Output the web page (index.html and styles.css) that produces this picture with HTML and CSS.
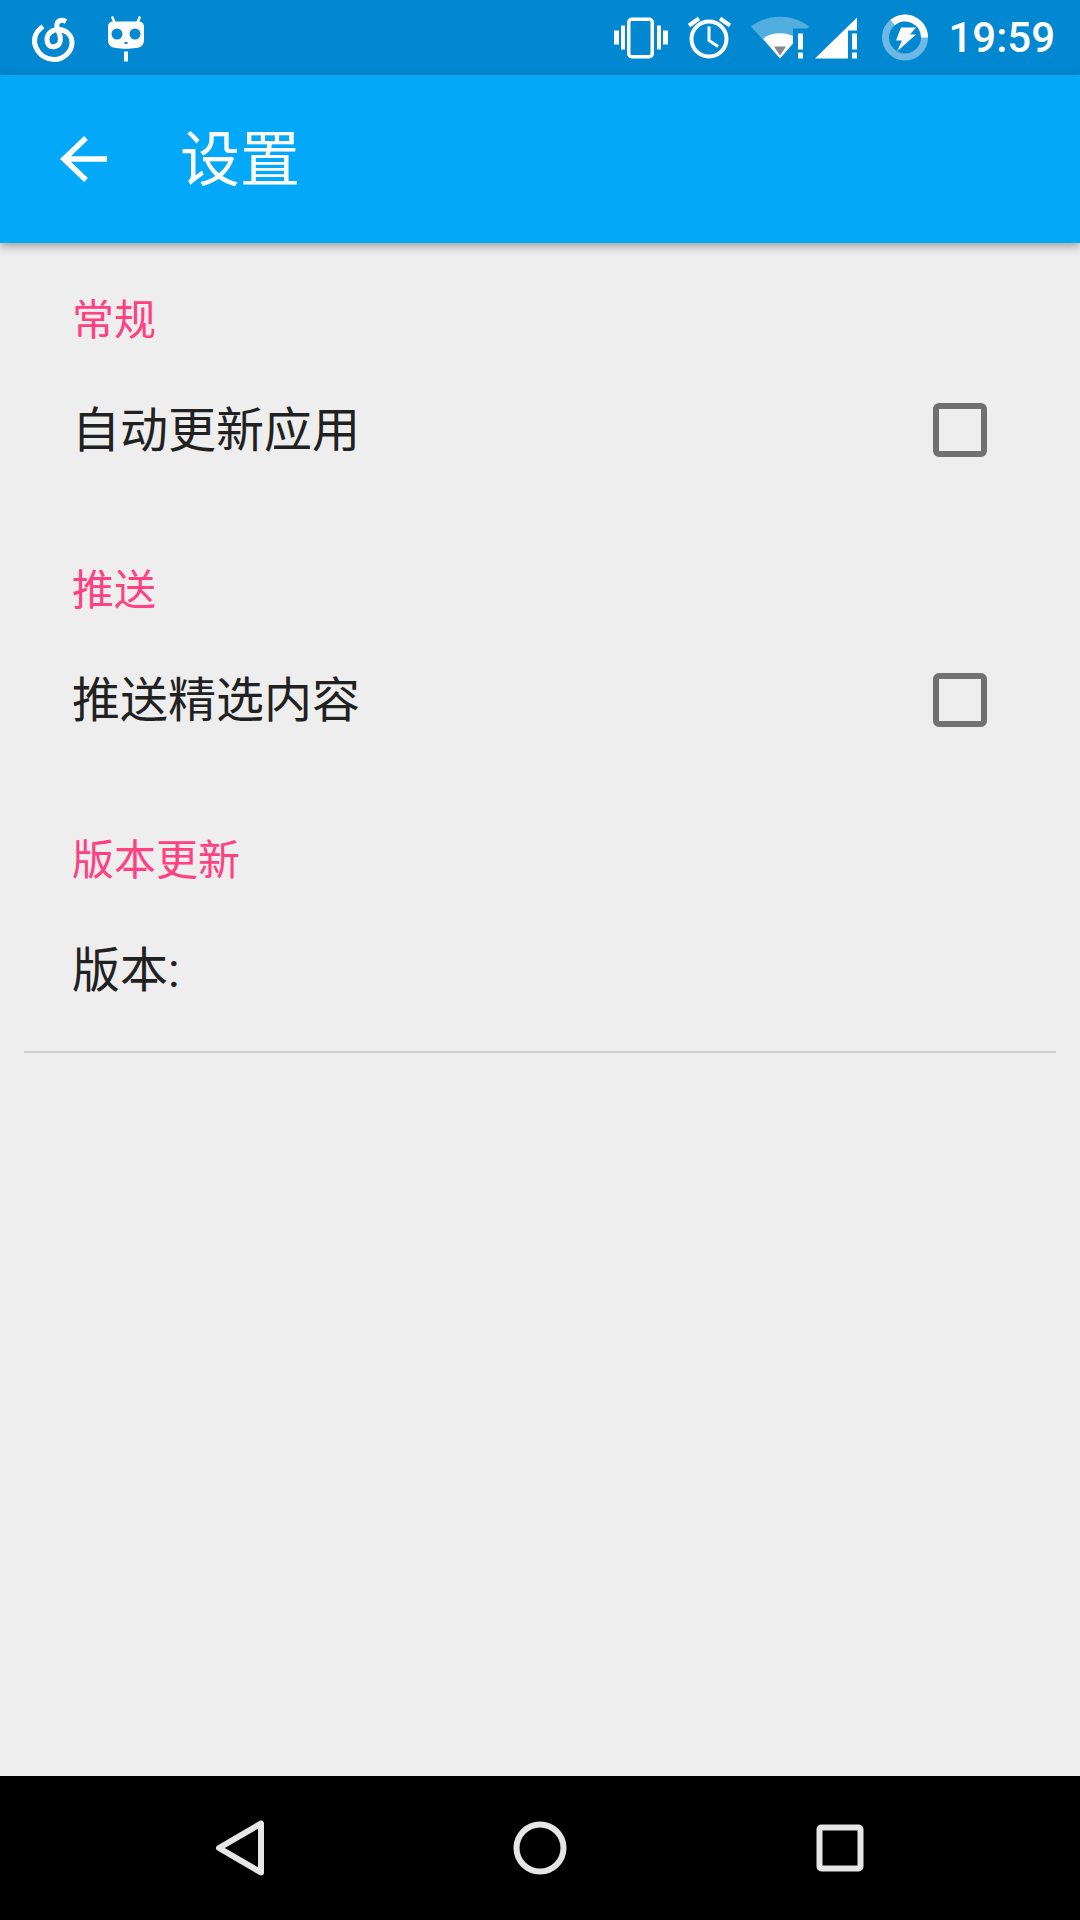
FILE: index.html
```html
<!DOCTYPE html>

<html lang="zh-CN">
    <head>
        <meta charset="utf-8">
        <title>设置</title>
        <meta name="viewport" content="width=device-width, initial-scale=1">
        <link rel="stylesheet" href="styles.css">
    </head>

    <body>
        <div class="screen">
            <div class="status-bar">
                <div class="status-left">
                    <svg class="status-icon" viewBox="27 10.5 54 54">
                        <path class="line" stroke-width="5" d="M43 26C34 32 33 41 36 47C40 56 48 59 54 59C65 59 72 50 72 42C72 34 65 29 59 29C52 29 47 33 47 39C47 45 51 47 55 46C60 45 61 40 60 35L57 27C56 21 60 18 66 21"/>
                    </svg>
                    <svg class="status-icon" viewBox="99 10.5 54 54">
                        <path class="solid" d="M114 21H138C142 21 144 23 144 26V39C144 45 141 47 136 47.500C130 48.500 122 48.500 116 47.500C111 47 108 45 108 39V26C108 23 110 21 114 21Z"/>
                        <path class="line" stroke-width="2.500" d="M112 16L115 23M140 16L137 23"/>
                        <circle class="hole" cx="117" cy="33.500" r="5.500"/>
                        <circle class="hole" cx="135" cy="33.500" r="5.500"/>
                        <rect class="hole" x="124.500" y="41.500" width="3" height="2"/>
                        <rect class="solid" x="124" y="51" width="4" height="10"/>
                    </svg>
                </div>
                <div class="status-right">
                    <svg class="status-icon" viewBox="614 10.5 54 54">
                        <rect class="line" stroke-width="3.500" x="628.750" y="18.750" width="23.500" height="37.500" rx="3"/>
                        <path class="solid" d="M614 30H619V44H614ZM621 25H625V49H621ZM657 25H661V49H657ZM663 30H668V44H663Z"/>
                    </svg>
                    <svg class="status-icon" viewBox="682 10.5 54 54">
                        <circle class="line" stroke-width="4" cx="709" cy="38.500" r="17.500"/>
                        <path class="line" stroke-width="3" d="M709 26V40L718 46"/>
                        <path class="line" stroke-width="4" d="M689 25L699 18M720 18L730 25"/>
                    </svg>
                    <svg class="status-icon wifi" viewBox="750 10.500 60 54">
                        <path class="faded" d="M751 26C768 13 792 13 809 26L780 58Z"/>
                        <path class="solid" d="M763 38C772 31 788 31 797 38L780 58Z"/>
                        <rect class="hole" x="793" y="28" width="17" height="32"/>
                        <path class="mobile-tip" d="M774 46H786L780 55Z"/>
                        <path class="solid" d="M798 33H803V49H798ZM798 52H803V58H798Z"/>
                    </svg>
                    <svg class="status-icon signal" viewBox="815 10.500 42 54">
                        <path class="solid" d="M815 58L857 17V30H848V58Z"/>
                        <path class="solid" d="M852 33H857V49H852ZM852 52H857V58H852Z"/>
                    </svg>
                    <svg class="status-icon battery" viewBox="878 10.500 54 54">
                        <circle class="ring" cx="905" cy="37" r="19.500"/>
                        <path class="line" stroke-width="7" d="M892.500 22A19.500 19.500 0 0 1 924.500 37"/>
                        <path class="solid" d="M901 27H916L910 34H916L897 51L902 40H896Z"/>
                    </svg>
                    <span class="clock">19:59</span>
                </div>
            </div>

            <div class="app-bar">
                <svg class="back-arrow" viewBox="0 0 48 48">
                    <path class="line" stroke-width="5.500" d="M47 24H4M26 3L4 24L26 45"/>
                </svg>
                <h1>设置</h1>
            </div>

            <div class="content">
                <div class="section">
                    <div class="section-title">常规</div>
                    <div class="pref-row">
                        <span class="pref-label">自动更新应用</span>
                        <div class="checkbox"></div>
                    </div>
                </div>
                <div class="section">
                    <div class="section-title">推送</div>
                    <div class="pref-row">
                        <span class="pref-label">推送精选内容</span>
                        <div class="checkbox"></div>
                    </div>
                </div>
                <div class="section">
                    <div class="section-title">版本更新</div>
                    <div class="pref-row">
                        <span class="pref-label">版本:</span>
                    </div>
                </div>
                <hr>
            </div>

            <div class="nav-bar">
                <svg class="nav-icon" viewBox="0 0 60 60">
                    <path class="nav-line" d="M9 30L51 5.500V54.500Z"/>
                </svg>
                <svg class="nav-icon" viewBox="0 0 60 60">
                    <circle class="nav-line" cx="30" cy="30" r="23.500"/>
                </svg>
                <svg class="nav-icon" viewBox="0 0 60 60">
                    <rect class="nav-line" x="9.500" y="9.500" width="41" height="41" rx="2"/>
                </svg>
            </div>
        </div>
    </body>
</html>
```

FILE: styles.css
```css
body {
    font-family: Roboto, "Noto Sans CJK SC", sans-serif;
    background-color: #eeeeee;
    margin: 0;
    padding: 0;
}

.screen {
    width: 1080px;
    height: 1920px;
    display: flex;
    flex-direction: column;
    overflow: hidden;
}

/* status bar */
.status-bar {
    height: 75px;
    flex: none;
    background-color: #0288d1;
    display: flex;
    align-items: center;
    justify-content: space-between;
    padding: 0 25px 0 27px;
}

.status-left {
    display: flex;
    align-items: center;
    gap: 18px;
}

.status-right {
    display: flex;
    align-items: center;
    gap: 14px;
}

.status-icon {
    width: 54px;
    height: 54px;
    display: block;
}

.status-icon.wifi {
    width: 60px;
}

.status-icon.signal {
    width: 42px;
    margin-left: -9px;
}

.status-icon.battery {
    margin-left: 7px;
}

.line {
    fill: none;
    stroke: #fff;
}

.solid {
    fill: #fff;
}

.hole {
    fill: #0288d1;
}

.faded {
    fill: rgba(255, 255, 255, 0.32);
}

.ring {
    fill: none;
    stroke: rgba(255, 255, 255, 0.42);
    stroke-width: 7;
}

.mobile-tip {
    fill: #888;
}

.clock {
    font-size: 42px;
    font-weight: 500;
    color: #fff;
    margin-left: 2px;
}

/* app bar */
.app-bar {
    height: 168px;
    flex: none;
    background-color: #03a9f8;
    display: flex;
    align-items: center;
    padding-left: 60px;
    box-shadow: 0 3px 9px rgba(0, 0, 0, 0.35);
    position: relative;
}

.back-arrow {
    width: 48px;
    height: 48px;
}

.app-bar h1 {
    font-size: 60px;
    font-weight: 400;
    color: #fff;
    margin: 0 0 10px 72px;
}

/* settings list */
.content {
    flex: 1;
    padding-top: 50px;
}

.section {
    padding: 0 93px 52px 72px;
}

.section-title {
    font-size: 42px;
    line-height: 56px;
    color: #ff4081;
}

.pref-row {
    height: 162px;
    display: flex;
    align-items: center;
    justify-content: space-between;
    font-size: 48px;
    color: #212121;
}

.pref-label {
    margin-bottom: 8px;
}

.checkbox {
    width: 54px;
    height: 54px;
    box-sizing: border-box;
    border: 6px solid #707070;
    border-radius: 6px;
}

hr {
    border: none;
    border-top: 2px solid #cfcfcf;
    margin: -52px 24px 0;
}

/* nav bar */
.nav-bar {
    height: 144px;
    flex: none;
    background-color: #000;
    display: grid;
    grid-template-columns: repeat(3, 1fr);
    justify-items: center;
    align-items: center;
    padding: 0 90px;
}

.nav-icon {
    width: 60px;
    height: 60px;
}

.nav-line {
    fill: none;
    stroke: #e6e6e6;
    stroke-width: 6;
    stroke-linejoin: round;
}
```
